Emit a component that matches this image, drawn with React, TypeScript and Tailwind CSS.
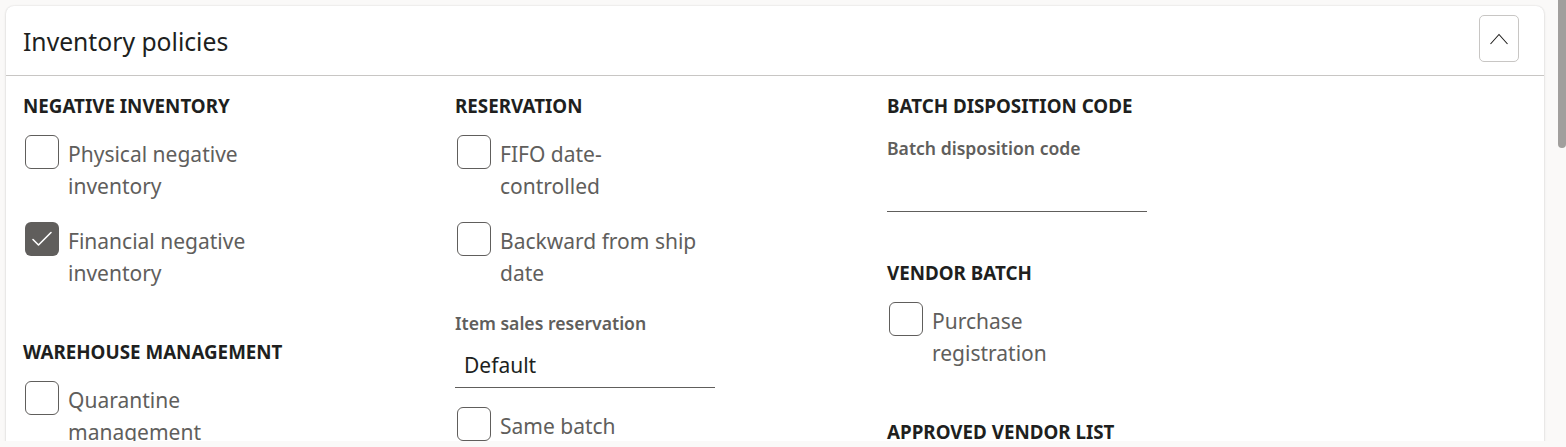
import React from "react";

const font = { fontFamily: '"Segoe UI", "Noto Sans", "Open Sans", sans-serif' };

function SectionTitle({ children }: { children: React.ReactNode }) {
  return (
    <h3 className="text-[18.8px] leading-[22px] font-bold uppercase text-[#201f1e]">
      {children}
    </h3>
  );
}

function Checkbox({ label, checked = false }: { label: string; checked?: boolean }) {
  return (
    <label className="flex items-start gap-[9px] pl-[2px]">
      <span
        className={
          checked
            ? "flex h-[34px] w-[34px] shrink-0 items-center justify-center rounded-[6px] bg-[#605e5c]"
            : "flex h-[34px] w-[34px] shrink-0 rounded-[6px] border border-[#605e5c] bg-white"
        }
      >
        {checked && (
          <svg width="34" height="34" viewBox="0 0 34 34" fill="none">
            <path d="M8 17.5 L13.5 23 L26 10.5" stroke="white" strokeWidth="1.6" strokeLinecap="round" strokeLinejoin="round" />
          </svg>
        )}
      </span>
      <span className="w-[198px] pt-[3px] text-[21px] leading-[32px] text-[#605e5c]">{label}</span>
    </label>
  );
}

function FieldLabel({ children }: { children: React.ReactNode }) {
  return <div className="text-[17.6px] leading-[20px] font-semibold text-[#605e5c]">{children}</div>;
}

function Field({ value = "" }: { value?: string }) {
  return (
    <div className="w-[260px] border-b border-[#605e5c] pt-[1px] pb-[6px] pl-[9px] text-[21px] leading-[32px] text-[#201f1e]">
      {value || "\u00a0"}
    </div>
  );
}

export default function App() {
  return (
    <div className="h-[447px] w-full overflow-hidden bg-[#faf9f8]" style={font}>
      <div className="flex h-[441px] overflow-hidden">
        <div className="pl-[6px] pt-[6px]">
          <div className="w-[1538px] rounded-[8px] bg-white shadow-[0_0_2px_rgba(0,0,0,0.12),0_1px_3px_rgba(0,0,0,0.1)]">
            {/* header */}
            <div className="flex h-[70px] items-center justify-between border-b border-[#c8c6c4] pl-[17px] pr-[25px]">
              <h2 className="pt-[3px] text-[24.7px] font-normal leading-[32px] text-[#201f1e]">Inventory policies</h2>
              <button className="flex h-[47px] w-[40px] items-center justify-center self-start mt-[9px] rounded-[5px] border border-[#c8c6c4] bg-white">
                <svg width="20" height="12" viewBox="0 0 20 12" fill="none">
                  <path d="M1.5 11 L10 1.5 L18.5 11" stroke="#201f1e" strokeWidth="1.1" />
                </svg>
              </button>
            </div>

            {/* body */}
            <div className="flex pl-[17px] pt-[19px] pb-[40px]">
              <div className="flex w-[432px] flex-col">
                <SectionTitle>Negative inventory</SectionTitle>
                <div className="mt-[18px] flex flex-col gap-[20px]">
                  <Checkbox label="Physical negative inventory" />
                  <Checkbox label="Financial negative inventory" checked />
                </div>
                <div className="mt-[52px]">
                  <SectionTitle>Warehouse management</SectionTitle>
                </div>
                <div className="mt-[18px] flex flex-col gap-[20px]">
                  <Checkbox label="Quarantine management" />
                </div>
              </div>

              <div className="flex w-[432px] flex-col">
                <SectionTitle>Reservation</SectionTitle>
                <div className="mt-[18px] flex flex-col gap-[20px]">
                  <Checkbox label="FIFO date-controlled" />
                  <Checkbox label="Backward from ship date" />
                </div>
                <div className="mt-[24px]">
                  <FieldLabel>Item sales reservation</FieldLabel>
                </div>
                <div className="mt-[15px]">
                  <Field value="Default" />
                </div>
                <div className="mt-[19px]">
                  <Checkbox label="Same batch" />
                </div>
              </div>

              <div className="flex w-[432px] flex-col">
                <SectionTitle>Batch disposition code</SectionTitle>
                <div className="mt-[21px]">
                  <FieldLabel>Batch disposition code</FieldLabel>
                </div>
                <div className="mt-[14px]">
                  <Field />
                </div>
                <div className="mt-[50px]">
                  <SectionTitle>Vendor batch</SectionTitle>
                </div>
                <div className="mt-[18px]">
                  <Checkbox label="Purchase registration" />
                </div>
                <div className="mt-[52px]">
                  <SectionTitle>Approved vendor list</SectionTitle>
                </div>
              </div>
            </div>
          </div>
        </div>
        <div className="ml-auto w-[8px] shrink-0">
          <div className="h-[148px] w-[8px] rounded-b-[4px] bg-[#a19f9d]" />
        </div>
      </div>
    </div>
  );
}
